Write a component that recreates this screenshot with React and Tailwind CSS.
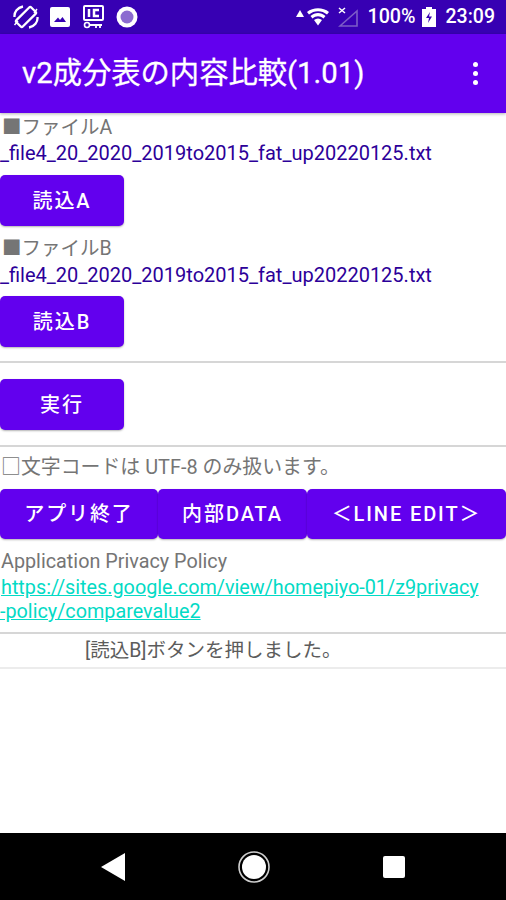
const font = { fontFamily: '"Roboto","Noto Sans CJK JP",sans-serif' };

function Btn({ className = "", children }) {
  return (
    <div className={`flex items-center justify-center rounded-[5px] bg-[#6200ee] text-white font-medium text-[20px] tracking-[1.9px] shadow-[0_1px_2px_rgba(0,0,0,0.3)] ${className}`}>
      {children}
    </div>
  );
}

function StatusIcons() {
  return (
    <div className="flex items-center">
      <svg width="26" height="24" viewBox="0 0 26 24" className="ml-[13px]" fill="none" stroke="white" strokeWidth="2.3">
        <rect x="8.5" y="1.5" width="9" height="21" rx="1.5" transform="rotate(45 13 12)" />
        <path d="M1.5 12 C1 7 4.5 2.5 10 1.5" />
        <path d="M24.5 12 C25 17 21.5 21.5 16 22.5" />
        <path d="M1.5 20 L5 16 M21 8 L24 4" strokeWidth="1.5" />
      </svg>
      <svg width="20" height="20" viewBox="0 0 20 20" className="ml-[11px]">
        <rect width="20" height="20" rx="2" fill="white" />
        <path d="M4 15 L8 10.5 L10 13 L12.5 10 L16 15 Z" fill="#3700b3" />
      </svg>
      <svg width="21" height="24" viewBox="0 0 21 24" className="ml-[13px]" fill="none" stroke="white">
        <rect x="1" y="1" width="19" height="14" rx="1" strokeWidth="2" />
        <path d="M6 4 V12" strokeWidth="2.5" />
        <path d="M16 5 H11 V11 H16" strokeWidth="2.5" />
        <circle cx="4" cy="20" r="2.5" strokeWidth="1.6" />
        <path d="M7 20 H19 M13 20 V23 M17 20 V23" strokeWidth="1.8" />
      </svg>
      <svg width="22" height="22" viewBox="0 0 22 22" className="ml-[12px]">
        <circle cx="11" cy="11" r="10.5" fill="white" />
        <circle cx="11" cy="11" r="6.5" fill="#8b6bd0" />
      </svg>
    </div>
  );
}

function StatusRight() {
  return (
    <div className="flex items-center text-white">
      <svg width="8" height="7" viewBox="0 0 8 7" className="mb-[7px]"><path d="M4 0 L8 7 H0 Z" fill="white" /></svg>
      <svg width="22" height="18" viewBox="0 0 22 18" className="ml-[3px]">
        <path d="M0 4 C6 -1 16 -1 22 4 L20 6.5 C15 2 7 2 2 6.5 Z" fill="white" />
        <path d="M3.5 8 C8 4 14 4 18.5 8 L16.5 10.5 C13 7.5 9 7.5 5.5 10.5 Z" fill="white" />
        <path d="M7 12 C9.5 10 12.5 10 15 12 L11 17.5 Z" fill="white" />
      </svg>
      <svg width="20" height="22" viewBox="0 0 20 22" className="ml-[9px]" fill="none">
        <path d="M19 5 V20 H2 Z" stroke="#7c5cc8" strokeWidth="1.6" />
        <path d="M1 2 L7 7 M7 2 L1 7" stroke="white" strokeWidth="1.5" />
      </svg>
      <span className="ml-[9px] text-[19.7px] font-medium leading-none">100%</span>
      <svg width="14" height="20" viewBox="0 0 14 20" className="ml-[6px]">
        <path d="M4 0 H10 V2 H14 V20 H0 V2 H4 Z" fill="white" />
        <path d="M8 5 L4 11 H7 L6 16 L10 9.5 H7 Z" fill="#3700b3" />
      </svg>
      <span className="ml-[10px] text-[19.5px] font-medium leading-none">23:09</span>
    </div>
  );
}

export default function App() {
  return (
    <div className="flex h-[900px] w-[506px] flex-col overflow-hidden bg-white" style={font}>
      <div className="flex h-[34px] items-center justify-between bg-[#3700b3] pr-[11px]">
        <StatusIcons />
        <StatusRight />
      </div>
      <div className="flex h-[79px] items-center justify-between bg-[#6200ee] pl-[22px] pr-[28px] shadow-[0_1px_3px_rgba(0,0,0,0.3)]">
        <span className="text-[29.3px] leading-none text-white [-webkit-text-stroke:0.3px_white]">v2成分表の内容比較(1.01)</span>
        <div className="flex flex-col gap-[4px]">
          <span className="h-[5px] w-[5px] rounded-full bg-white" />
          <span className="h-[5px] w-[5px] rounded-full bg-white" />
          <span className="h-[5px] w-[5px] rounded-full bg-white" />
        </div>
      </div>

      <div className="flex flex-1 flex-col">
        <div className="mt-[3px] h-[24px] pl-[2px] text-[19.5px] leading-[24px] text-[#757575]">■ファイルA</div>
        <div className="h-[26px] whitespace-nowrap text-[20px] leading-[26px] text-[#2c0099]">_file4_20_2020_2019to2015_fat_up20220125.txt</div>
        <Btn className="mt-[9px] h-[51px] w-[124px]">読込A</Btn>
        <div className="mt-[11px] h-[24px] pl-[2px] text-[19.5px] leading-[24px] text-[#757575]">■ファイルB</div>
        <div className="mt-[1px] h-[26px] whitespace-nowrap text-[20px] leading-[26px] text-[#2c0099]">_file4_20_2020_2019to2015_fat_up20220125.txt</div>
        <Btn className="mt-[8px] h-[51px] w-[124px]">読込B</Btn>
        <div className="mt-[14px] h-[2px] bg-[#d6d6d6]" />
        <Btn className="mt-[16px] h-[51px] w-[124px]">実行</Btn>
        <div className="mt-[15px] h-[2px] bg-[#d6d6d6]" />
        <div className="mt-[8px] h-[26px] pl-[1px] text-[19.9px] leading-[26px] text-[#757575]">□文字コードは UTF-8 のみ扱います。</div>
        <div className="mt-[8px] flex h-[50px]">
          <Btn className="w-[158px]">アプリ終了</Btn>
          <Btn className="w-[149px]">内部DATA</Btn>
          <Btn className="flex-1">＜LINE EDIT＞</Btn>
        </div>
        <div className="mt-[11px] h-[24px] pl-[1px] text-[19.8px] leading-[24px] text-[#757575]">Application Privacy Policy</div>
        <div className="mt-[2px] text-[19.8px] leading-[24px] text-[#03dac5] underline">
          <div className="pl-[1px]">https://sites.google.com/view/homepiyo-01/z9privacy</div>
          <div>-policy/comparevalue2</div>
        </div>
        <div className="mt-[8px] h-[2px] bg-[#d6d6d6]" />
        <div className="flex h-[33px] items-center pl-[85px] text-[19.5px] text-[#5c5c5c]">[読込B]ボタンを押しました。</div>
        <div className="h-[2px] bg-[#ececec]" />
      </div>

      <div className="flex h-[67px] items-center bg-black pl-[101px]">
        <svg width="24" height="28" viewBox="0 0 24 28"><path d="M24 0 V28 L0 14 Z" fill="white" /></svg>
        <svg width="32" height="32" viewBox="0 0 32 32" className="ml-[113px]" fill="none">
          <circle cx="16" cy="16" r="15" stroke="#d0d0d0" strokeWidth="1.6" />
          <circle cx="16" cy="16" r="12" fill="white" />
        </svg>
        <div className="ml-[113px] h-[22px] w-[22px] rounded-[2px] bg-white" />
      </div>
    </div>
  );
}
